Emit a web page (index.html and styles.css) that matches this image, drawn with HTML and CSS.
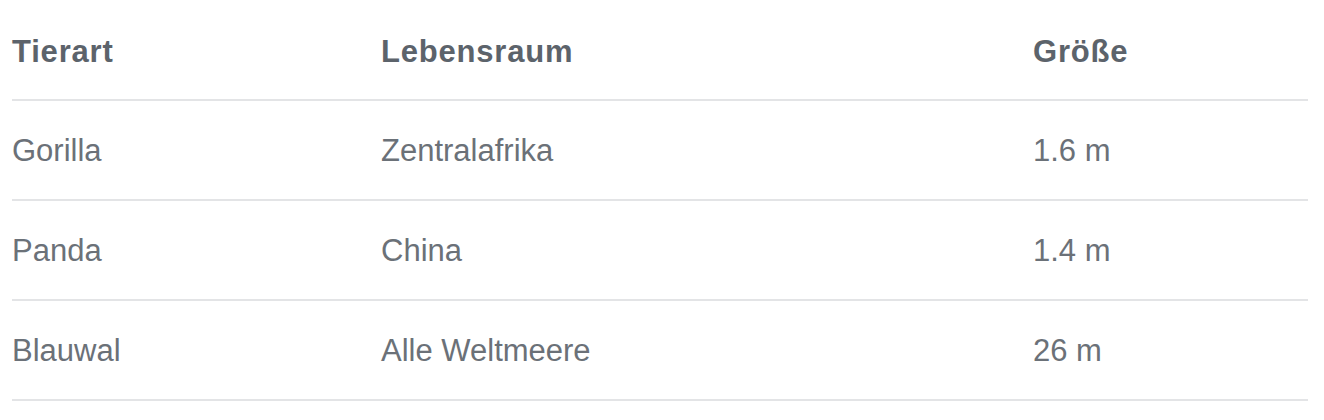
FILE: index.html
```html
<!DOCTYPE html>
<html lang="de">
<head>
<meta charset="utf-8">
<link rel="stylesheet" href="styles.css">
</head>
<body>
<table class="animals">
  <thead>
    <tr><th class="c1">Tierart</th><th class="c2">Lebensraum</th><th class="c3">Größe</th></tr>
  </thead>
  <tbody>
    <tr><td>Gorilla</td><td>Zentralafrika</td><td>1.6 m</td></tr>
    <tr><td>Panda</td><td>China</td><td>1.4 m</td></tr>
    <tr><td>Blauwal</td><td>Alle Weltmeere</td><td>26 m</td></tr>
  </tbody>
</table>
</body>
</html>
```
FILE: styles.css
```css
html, body { margin: 0; background: #fff; }
body { padding: 1px 16px 0 12px; font-family: "Liberation Sans", Arial, sans-serif; }
.animals { width: 1296px; border-collapse: collapse; table-layout: fixed; }
.animals th, .animals td {
  padding: 0; text-align: left; vertical-align: middle;
  border-bottom: 2px solid #e3e4e6; font-size: 31px; line-height: 1.2;
}
.animals th { height: 95px; padding-top: 3px; font-weight: bold; color: #5c636b; letter-spacing: 0.8px; }
.animals td { height: 96px; padding-top: 2px; color: #6b7178; font-weight: normal; }
.c1 { width: 369px; }
.c2 { width: 652px; }
.c3 { width: 275px; }
```
